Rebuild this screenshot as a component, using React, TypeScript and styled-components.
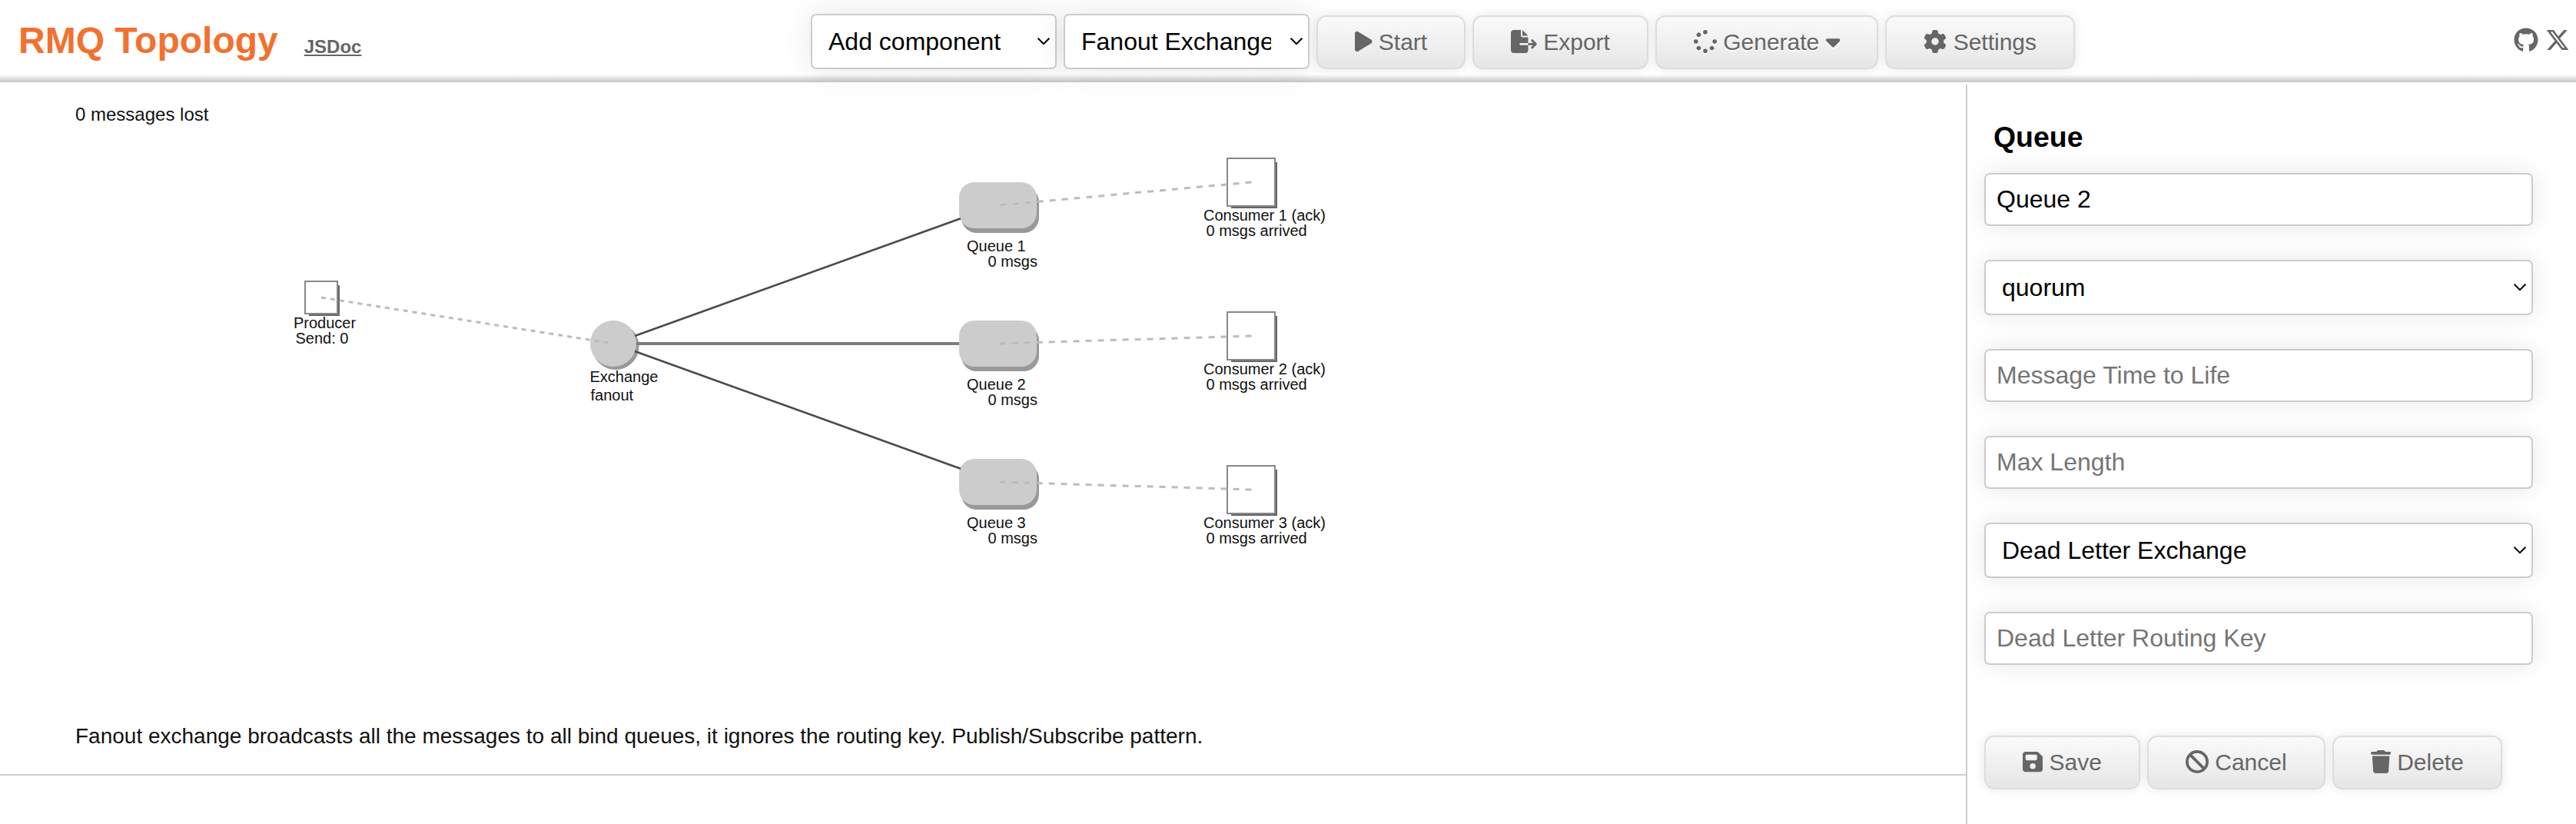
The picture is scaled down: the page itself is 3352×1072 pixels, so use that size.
import React from "react";
import styled, { createGlobalStyle } from "styled-components";
import {
  FaBan,
  FaCaretDown,
  FaFileExport,
  FaFloppyDisk,
  FaGear,
  FaGithub,
  FaPlay,
  FaSpinner,
  FaTrash,
  FaXTwitter,
} from "react-icons/fa6";

const FONT = '"Liberation Sans", Arial, Helvetica, sans-serif';

const GlobalStyle = createGlobalStyle`
  *, *::before, *::after { box-sizing: border-box; }
  body {
    margin: 0;
    background: #fff;
    font-family: ${FONT};
    font-size: 32px;
    color: #000;
    overflow: hidden;
  }
`;

const Page = styled.div`
  display: flex;
  flex-direction: column;
  height: 1072px;
`;

const Header = styled.header`
  display: flex;
  align-items: flex-start;
  flex: none;
  height: 107px;
  padding-right: 8px;
  background: linear-gradient(to bottom, #fff 97px, #e6e6e6 101px, #c4c4c4 107px);
`;

const Brand = styled.div`
  display: flex;
  align-items: baseline;
  gap: 34px;
  width: 1055px;
  padding: 26px 0 0 24px;
`;

const Title = styled.h1`
  margin: 0;
  font-size: 48px;
  line-height: 54px;
  font-weight: bold;
  color: #f2712e;
`;

const DocLink = styled.a`
  font-size: 24px;
  font-weight: bold;
  color: #666;
  text-decoration: underline;
`;

const Toolbar = styled.div`
  display: flex;
  align-items: flex-end;
  gap: 9px;
  height: 90px;
`;

const Social = styled.nav`
  display: flex;
  align-items: center;
  gap: 9px;
  height: 104px;
  margin-left: auto;
  font-size: 32px;
  color: #666;
`;

const SocialLink = styled.a`
  display: flex;
  color: inherit;
`;

const SelectBox = styled.div<{ $width?: number }>`
  display: grid;
  align-items: center;
  width: ${(p) => (p.$width ? `${p.$width}px` : "100%")};
  height: 72px;
`;

const NativeSelect = styled.select<{ $glow: number }>`
  grid-area: 1 / 1;
  appearance: none;
  width: 100%;
  height: 72px;
  margin: 0;
  padding: 0 48px 0 21px;
  border: 2px solid #ccc;
  border-radius: 7px;
  background: #fff;
  box-shadow: 0 0 ${(p) => p.$glow}px rgba(0, 0, 0, 0.1);
  font: 32px ${FONT};
  color: #000;
`;

const Chevron = styled.svg`
  grid-area: 1 / 1;
  justify-self: end;
  margin-right: 8px;
  width: 18px;
  height: 12px;
  pointer-events: none;
`;

const TextField = styled.input`
  width: 100%;
  height: 69px;
  margin: 0;
  padding: 0 14px;
  border: 2px solid #ccc;
  border-radius: 7px;
  background: #fff;
  box-shadow: 0 0 30px rgba(0, 0, 0, 0.1);
  font: 32px ${FONT};
  color: #000;
  &::placeholder {
    color: #757575;
    opacity: 1;
  }
`;

const Button = styled.button<{ $raised?: boolean }>`
  display: flex;
  align-items: center;
  gap: 8.3px;
  height: 70px;
  margin: 0;
  padding: 0 48px;
  border: 2px solid #ddd;
  border-radius: 13px;
  background: linear-gradient(to bottom, #fafafa, #e6e6e6);
  box-shadow: 0 0 14px rgba(0, 0, 0, 0.1);
  font: 30px ${FONT};
  color: #666;
  white-space: nowrap;
  text-shadow: ${(p) => (p.$raised ? "0 2px 0 #fff" : "none")};
`;

const Glyph = styled.span<{ $width: number; $raised?: boolean }>`
  display: block;
  flex: none;
  width: ${(p) => p.$width}px;
  height: 30px;
  margin-bottom: 2px;
  filter: ${(p) => (p.$raised ? "drop-shadow(0 2px 0 #fff)" : "none")};

  & > svg {
    display: block;
    width: 100%;
    height: 100%;
  }
`;

const Main = styled.main`
  display: flex;
  flex: 1;
  min-height: 0;
  padding-top: 3px;
`;

const Stage = styled.section`
  width: 2558px;
  height: 899px;
  border-bottom: 2px solid #ccc;
`;

const Diagram = styled.svg`
  display: block;
  font-family: ${FONT};
`;

const Sidebar = styled.aside`
  flex: 1;
  padding: 46px 56px 0 22px;
  border-left: 2px solid #ccc;
`;

const PanelTitle = styled.h3`
  margin: 0 0 25px;
  padding-left: 12px;
  font-size: 37.44px;
  line-height: 44px;
  font-weight: bold;
`;

const Form = styled.form`
  display: flex;
  flex-direction: column;
  gap: 44px;
`;

const Actions = styled.div`
  display: flex;
  gap: 9px;
  margin-top: 48px;
`;

function Select({ value, width, glow = 30 }: { value: string; width?: number; glow?: number }) {
  return (
    <SelectBox $width={width}>
      <NativeSelect defaultValue={value} $glow={glow}>
        <option>{value}</option>
      </NativeSelect>
      <Chevron viewBox="0 0 18 12">
        <path d="M1.6 1.8 L9 9.2 L16.4 1.8" fill="none" stroke="#000" strokeWidth="2" />
      </Chevron>
    </SelectBox>
  );
}

const EXCHANGE = { x: 798, y: 447 };

const QUEUES = [
  { name: "Queue 1", y: 267, consumerY: 237 },
  { name: "Queue 2", y: 447, consumerY: 437 },
  { name: "Queue 3", y: 627, consumerY: 637 },
];

function Terminal({ x, y, size }: { x: number; y: number; size: number }) {
  const half = size / 2;
  return (
    <g>
      <rect x={x - half + 5} y={y - half + 5} width={size - 2} height={size - 2} fill="#666" />
      <rect x={x - half} y={y - half} width={size} height={size} fill="#fff" stroke="#888" strokeWidth="2" />
    </g>
  );
}

function Binding({ y }: { y: number }) {
  const slope = (y - EXCHANGE.y) / 500;
  const level = slope === 0;
  const startX = level ? 828 : 826;
  const endX = level ? 1248 : 1250;
  return (
    <line
      x1={startX}
      y1={EXCHANGE.y + (startX - EXCHANGE.x) * slope}
      x2={endX}
      y2={EXCHANGE.y + (endX - EXCHANGE.x) * slope}
      stroke={level ? "#7d7d7d" : "#4a4a4a"}
      strokeWidth={level ? 4 : 2.6}
    />
  );
}

function Topology() {
  return (
    <Diagram width="2558" height="897" viewBox="0 110 2558 897" fill="#111" fontSize="20">
      <text x="98" y="156.5" fontSize="24">0 messages lost</text>

      <Terminal x={418} y={387} size={42} />
      <text x="382" y="427">Producer</text>
      <text x="384.5" y="447">Send: 0</text>

      <circle cx={EXCHANGE.x + 3} cy={EXCHANGE.y + 3.5} r="30.5" fill="#999" />
      <circle cx={EXCHANGE.x} cy={EXCHANGE.y} r="30" fill="#ccc" />
      <text x="767.5" y="497">Exchange</text>
      <text x="768.5" y="521">fanout</text>

      <line x1="418" y1="387" x2="798" y2="447" stroke="#bcbcbc" strokeWidth="3" strokeDasharray="6 6" />

      {QUEUES.map((q, i) => (
        <g key={q.name}>
          <rect x="1251" y={q.y - 24} width="101" height="60" rx="20" fill="#999" />
          <rect x="1248" y={q.y - 30} width="101" height="60" rx="20" fill="#ccc" />
          <Binding y={q.y} />
          <text x="1258" y={q.y + 60}>{q.name}</text>
          <text x="1285.5" y={q.y + 80}>0 msgs</text>

          <Terminal x={1628} y={q.consumerY} size={62} />
          <text x="1566" y={q.consumerY + 50}>{`Consumer ${i + 1} (ack)`}</text>
          <text x="1569.5" y={q.consumerY + 70}>0 msgs arrived</text>
          <line
            x1="1628.5"
            y1={q.consumerY}
            x2="1300"
            y2={q.y}
            stroke="#bcbcbc"
            strokeWidth="3"
            strokeDasharray="8 8"
          />
        </g>
      ))}

      <text x="98" y="967" fontSize="28">
        Fanout exchange broadcasts all the messages to all bind queues, it ignores the routing key. Publish/Subscribe pattern.
      </text>
    </Diagram>
  );
}

export default function App() {
  return (
    <>
      <GlobalStyle />
      <Page>
        <Header>
          <Brand>
            <Title>RMQ Topology</Title>
            <DocLink>JSDoc</DocLink>
          </Brand>
          <Toolbar>
            <Select value="Add component" width={320} glow={40} />
            <Select value="Fanout Exchange" width={320} glow={40} />
            <Button><Glyph $width={22.5}><FaPlay /></Glyph>Start</Button>
            <Button><Glyph $width={33.75}><FaFileExport /></Glyph>Export</Button>
            <Button $raised>
              <Glyph $width={30} $raised><FaSpinner /></Glyph>
              Generate
              <Glyph $width={18.75} $raised><FaCaretDown /></Glyph>
            </Button>
            <Button><Glyph $width={30}><FaGear /></Glyph>Settings</Button>
          </Toolbar>
          <Social>
            <SocialLink><FaGithub /></SocialLink>
            <SocialLink><FaXTwitter /></SocialLink>
          </Social>
        </Header>
        <Main>
          <Stage>
            <Topology />
          </Stage>
          <Sidebar>
            <PanelTitle>Queue</PanelTitle>
            <Form>
              <TextField defaultValue="Queue 2" />
              <Select value="quorum" />
              <TextField placeholder="Message Time to Life" />
              <TextField placeholder="Max Length" />
              <Select value="Dead Letter Exchange" />
              <TextField placeholder="Dead Letter Routing Key" />
              <Actions>
                <Button type="button"><Glyph $width={26.25}><FaFloppyDisk /></Glyph>Save</Button>
                <Button type="button"><Glyph $width={30}><FaBan /></Glyph>Cancel</Button>
                <Button type="button"><Glyph $width={26.25}><FaTrash /></Glyph>Delete</Button>
              </Actions>
            </Form>
          </Sidebar>
        </Main>
      </Page>
    </>
  );
}
